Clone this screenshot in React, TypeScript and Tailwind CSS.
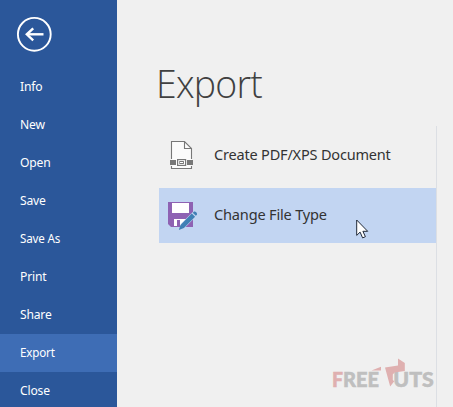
const items = ['Info', 'New', 'Open', 'Save', 'Save As', 'Print', 'Share', 'Export', 'Close'];

function BackIcon() {
  return (
    <svg width="36" height="36" viewBox="0 0 36 36" fill="none" stroke="#fff">
      <circle cx="18.3" cy="18.3" r="16.4" strokeWidth="1.9" />
      <path d="M27.5 18.3H11" strokeWidth="2.4" />
      <path d="M17.2 12.3l-6.4 6 6.4 6" strokeWidth="2.4" />
    </svg>
  );
}

function DocumentIcon() {
  return (
    <svg width="24" height="30" viewBox="0 0 24 30" fill="none" stroke="#777">
      <path d="M1.5 20V1.5H14L21.5 8.5V28.5h-20z" fill="#fbfbfb" stroke="none" />
      <path d="M1.5 19V1.5H14.5L21.5 8.5V19M14.5 1.5v7h7M1.5 26v2.5h20V26" strokeWidth="1.1" />
      <path d="M0 20h6v5H0zM17 20h6v5h-6z" fill="#777" stroke="none" />
      <rect x="7.6" y="19.6" width="8" height="5.8" fill="#fff" strokeWidth="1.2" />
      <rect x="9.8" y="21.5" width="3.6" height="2" strokeWidth="1" />
    </svg>
  );
}

function SaveEditIcon() {
  return (
    <svg width="30" height="30" viewBox="0 0 30 30">
      <path d="M0 1h25v25H3l-3-3z" fill="#8e62b3" />
      <path d="M4 2h17v10H4zM6 18h12v7H6z" fill="#fff" />
      <path d="M9 19h3v6H9z" fill="#8e62b3" />
      <path d="M11.3 28.2l1.5-5.2L25 10.7l4 3.8-12.2 12.2z" fill="#c3d5f1" />
      <path d="M10.8 29l1.7-5.1L23.8 12.6l3.3 3.2L15.9 27.1zM24.7 11.8l.9-.9c1.5-1.4 4.5 1.5 3.1 3l-.9.9z" fill="#4080b5" />
    </svg>
  );
}

function Pointer() {
  return (
    <svg className="absolute left-[356px] top-[219px]" width="13" height="21" viewBox="0 0 13 21">
      <path d="M.7 1v15.4l3.4-3.3 2.5 5.8 2.8-1.2-2.5-5.4h4.8z" fill="#fff" stroke="#202938" />
    </svg>
  );
}

function Watermark() {
  return (
    <svg className="absolute left-[332px] top-[357px]" width="104" height="34" viewBox="0 0 104 34">
      <g fontFamily="Lato, sans-serif" fontWeight="900" fontSize="20" strokeWidth="0.5">
        <text x="0" y="29.5" fill="#dfb0b0" stroke="#dfb0b0" textLength="11" lengthAdjust="spacingAndGlyphs">F</text>
        <text x="11" y="29.5" fill="#bfbfbf" stroke="#bfbfbf" textLength="36" lengthAdjust="spacingAndGlyphs">REE</text>
        <text x="61.3" y="29.5" fill="#bfbfbf" stroke="#bfbfbf" textLength="40.5" lengthAdjust="spacingAndGlyphs">UTS</text>
      </g>
      <path d="M39.5 13.5l9.5-3.7v3.7zM53 10.5L66 8.5V1.5l6.8 4.5v8L62.5 15.5l-1.7 2v5.5l1.4 1.2-4 5.3z" fill="#dfb0b0" />
    </svg>
  );
}

export default function App() {
  return (
    <div className="relative flex h-[407px] w-[453px] overflow-hidden bg-[#f0f0f0] font-['Noto_Sans','Open_Sans',sans-serif]">
      <aside className="w-[117px] shrink-0 bg-[#2b579a] text-white">
        <div className="h-[68px] pl-4 pt-4">
          <BackIcon />
        </div>
        <nav>
          {items.map((label) => (
            <div
              key={label}
              className={`flex h-[38px] items-center pl-5 text-[12.5px] ${label === 'Export' ? 'bg-[#3e6db5]' : ''}`}
            >
              <span className={`origin-left tracking-[-0.2px] ${label === 'Export' || label === 'Save As' ? 'scale-x-[0.93]' : 'scale-x-[0.97]'}`}>{label}</span>
            </div>
          ))}
        </nav>
      </aside>
      <main className="w-[320px] shrink-0 pl-[42px]">
        <h1 className="h-[126px] pt-[56px] font-['Open_Sans'] text-[39px] font-light leading-[54px] tracking-[-0.8px] text-[#404040]">
          <span className="-ml-[3px] inline-block origin-left scale-x-[0.96]">Export</span>
        </h1>
        <div className="h-[281px] border-r border-[#dcdfe4] text-[15px] text-[#333]">
          <div className="flex h-[62px] items-center pb-[4px] pl-[11px]">
            <DocumentIcon />
            <span className="relative -top-px ml-5 origin-left scale-x-[0.968] whitespace-nowrap tracking-[-0.2px]">Create PDF/XPS Document</span>
          </div>
          <div className="flex h-[55px] items-center bg-[#c2d5f2] pl-[9px]">
            <SaveEditIcon />
            <span className="relative -top-px ml-4 origin-left scale-x-[0.972] whitespace-nowrap tracking-[-0.2px]">Change File Type</span>
          </div>
        </div>
      </main>
      <Pointer />
      <Watermark />
    </div>
  );
}
